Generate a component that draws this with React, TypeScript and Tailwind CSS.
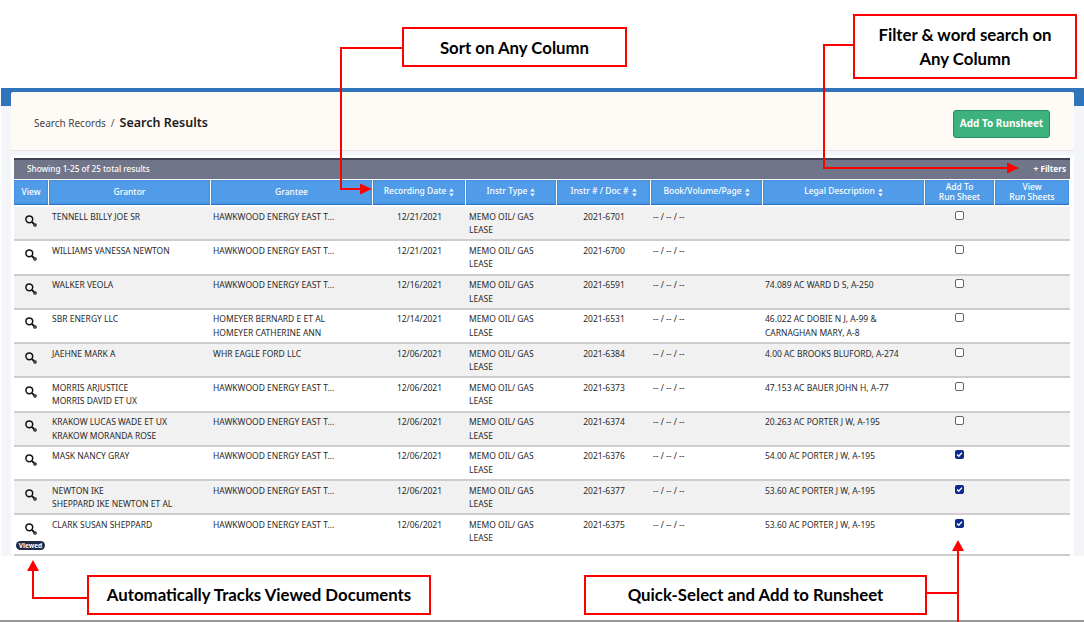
import { Fragment } from "react";

type Row = {
  grantor: string[];
  grantee: string[];
  date: string;
  doc: string;
  legal: string[];
  checked?: boolean;
  viewed?: boolean;
};

const HAWKWOOD = "HAWKWOOD ENERGY EAST T...";

const rows: Row[] = [
  { grantor: ["TENNELL BILLY JOE SR"], grantee: [HAWKWOOD], date: "12/21/2021", doc: "2021-6701", legal: [] },
  { grantor: ["WILLIAMS VANESSA NEWTON"], grantee: [HAWKWOOD], date: "12/21/2021", doc: "2021-6700", legal: [] },
  { grantor: ["WALKER VEOLA"], grantee: [HAWKWOOD], date: "12/16/2021", doc: "2021-6591", legal: ["74.089 AC WARD D S, A-250"] },
  {
    grantor: ["SBR ENERGY LLC"],
    grantee: ["HOMEYER BERNARD E ET AL", "HOMEYER CATHERINE ANN"],
    date: "12/14/2021",
    doc: "2021-6531",
    legal: ["46.022 AC DOBIE N J, A-99 &", "CARNAGHAN MARY, A-8"],
  },
  { grantor: ["JAEHNE MARK A"], grantee: ["WHR EAGLE FORD LLC"], date: "12/06/2021", doc: "2021-6384", legal: ["4.00 AC BROOKS BLUFORD, A-274"] },
  { grantor: ["MORRIS ARJUSTICE", "MORRIS DAVID ET UX"], grantee: [HAWKWOOD], date: "12/06/2021", doc: "2021-6373", legal: ["47.153 AC BAUER JOHN H, A-77"] },
  { grantor: ["KRAKOW LUCAS WADE ET UX", "KRAKOW MORANDA ROSE"], grantee: [HAWKWOOD], date: "12/06/2021", doc: "2021-6374", legal: ["20.263 AC PORTER J W, A-195"] },
  { grantor: ["MASK NANCY GRAY"], grantee: [HAWKWOOD], date: "12/06/2021", doc: "2021-6376", legal: ["54.00 AC PORTER J W, A-195"], checked: true },
  { grantor: ["NEWTON IKE", "SHEPPARD IKE NEWTON ET AL"], grantee: [HAWKWOOD], date: "12/06/2021", doc: "2021-6377", legal: ["53.60 AC PORTER J W, A-195"], checked: true },
  { grantor: ["CLARK SUSAN SHEPPARD"], grantee: [HAWKWOOD], date: "12/06/2021", doc: "2021-6375", legal: ["53.60 AC PORTER J W, A-195"], checked: true, viewed: true },
];

const gridCols = "grid grid-cols-[35px_162px_162px_93px_91px_94px_112px_162px_70px_75px]";

function SortCaret() {
  return (
    <svg width="5" height="9" viewBox="0 0 5 9" className="ml-[3px] inline-block" fill="#ffffff">
      <path d="M2.5 0.5 L4.8 3.5 H0.2 Z" />
      <path d="M2.5 8.5 L4.8 5.5 H0.2 Z" />
    </svg>
  );
}

function HeaderCell({ children, sort }: { children: React.ReactNode; sort?: boolean }) {
  return (
    <div className="mr-[1px] flex h-[25px] items-center justify-center border-b border-[#2f78c4] bg-[#519ce9] pb-[1px] text-center text-[8.5px] leading-[10px] font-medium text-white shadow-[inset_0_0_2px_#2f78c4]">
      <span>
        {children}
        {sort && <SortCaret />}
      </span>
    </div>
  );
}

function LensIcon() {
  return (
    <svg width="12" height="12" viewBox="0 0 12 12" fill="none" stroke="#111111" className="-ml-[1px]">
      <circle cx="4.3" cy="4.3" r="3.4" strokeWidth="1.5" />
      <path d="M6.8 6.8 L9 9" strokeWidth="1.8" />
      <circle cx="10" cy="10" r="1.2" strokeWidth="1.2" />
    </svg>
  );
}

function Checkbox({ checked }: { checked?: boolean }) {
  if (checked) {
    return (
      <span className="flex h-[9px] w-[9px] items-center justify-center rounded-[2px] bg-[#0b2a8c]">
        <svg width="7" height="7" viewBox="0 0 7 7" fill="none" stroke="#ffffff" strokeWidth="1.4">
          <path d="M1 3.6 L2.8 5.3 L6 1.6" />
        </svg>
      </span>
    );
  }
  return <span className="block h-[9px] w-[9px] rounded-[2px] border border-[#666666] bg-white" />;
}

function Lines({ items }: { items: string[] }) {
  return (
    <>
      {items.map((item) => (
        <div key={item} className="whitespace-nowrap">
          {item}
        </div>
      ))}
    </>
  );
}

function TableRow({ row, shaded }: { row: Row; shaded: boolean }) {
  return (
    <div
      className={`${gridCols} border-b-2 border-[#cdcdcd] pt-[2.5px] text-[8.5px] leading-[13.6px] text-[#2a2a2a] ${
        row.viewed ? "h-[41px]" : "h-[34.25px]"
      } ${shaded ? "bg-[#f1f1f1]" : "bg-white"}`}
    >
      <div className="flex flex-col items-center pt-[5px]">
        <LensIcon />
        {row.viewed && (
          <span className="mt-[6px] -ml-[2px] rounded-full bg-[#1f2a44] px-[3px] text-[6.5px] leading-[9px] font-bold text-white">
            Viewed
          </span>
        )}
      </div>
      <div className="pl-[3px]">
        <Lines items={row.grantor} />
      </div>
      <div className="pl-[2px]">
        <Lines items={row.grantee} />
      </div>
      <div className="text-center">{row.date}</div>
      <div className="pl-[3px]">
        <div>MEMO OIL/ GAS</div>
        <div>LEASE</div>
      </div>
      <div className="text-center">{row.doc}</div>
      <div className="pl-[2px]">-- / -- / --</div>
      <div className="pl-[2px]">
        <Lines items={row.legal} />
      </div>
      <div className="flex justify-center pt-[1px] pr-[2px]">
        <Checkbox checked={row.checked} />
      </div>
      <div />
    </div>
  );
}

function Callout({ className, lines }: { className: string; lines: string[] }) {
  return (
    <div
      className={`absolute flex flex-col items-center justify-center border-2 border-[#ff0000] bg-white font-['Lato',sans-serif] text-[16.8px] leading-[24px] font-bold text-black ${className}`}
    >
      {lines.map((line) => (
        <Fragment key={line}>
          <div>{line}</div>
        </Fragment>
      ))}
    </div>
  );
}

export default function App() {
  return (
    <div className="relative flex h-[622px] w-[1084px] flex-col overflow-hidden bg-white pt-[88px] font-['Noto_Sans',sans-serif]">
      <div className="ml-[1px] h-[468px] bg-[#f3f5f9]">
        <div className="h-[18px] bg-[#2f75bb]" />
        <div className="mr-[10px] ml-[10px] -mt-[14px] flex flex-col gap-[4px]">
          {/* Title card */}
          <div className="flex h-[59px] items-center justify-between rounded-[2px] border-b border-[#e6e6e6] bg-[#fefbf6] pt-[5px] pr-[24px] pl-[23px]">
            <div className="flex items-center">
              <span className="text-[10px] text-[#444444]">Search Records</span>
              <span className="mx-[5px] text-[10px] text-[#555555]">/</span>
              <span className="text-[12.5px] font-semibold text-[#1c1c1c]">Search Results</span>
            </div>
            <button className="h-[28px] w-[97px] rounded-[3px] border border-[#1f8f62] bg-[#3db27f] text-[10px] font-bold text-white">
              Add To Runsheet
            </button>
          </div>

          {/* Results table */}
          <div className="h-[401px] rounded-[2px] bg-white pt-[3px] pl-[3px]">
            <div className="flex h-[21px] w-[1056px] items-center justify-between border-t-2 border-[#3f4356] bg-[#70758a] pr-[4px] pl-[13px] text-[8.2px] font-medium text-white">
              <span>Showing 1-25 of 25 total results</span>
              <span className="font-bold">+ Filters</span>
            </div>
            <div className={`${gridCols} mt-[1px] w-[1056px] border-b-2 border-white`}>
              <HeaderCell>View</HeaderCell>
              <HeaderCell>Grantor</HeaderCell>
              <HeaderCell>Grantee</HeaderCell>
              <HeaderCell sort>Recording Date</HeaderCell>
              <HeaderCell sort>Instr Type</HeaderCell>
              <HeaderCell sort>Instr # / Doc #</HeaderCell>
              <HeaderCell sort>Book/Volume/Page</HeaderCell>
              <HeaderCell sort>Legal Description</HeaderCell>
              <HeaderCell>
                Add To
                <br />
                Run Sheet
              </HeaderCell>
              <HeaderCell>
                View
                <br />
                Run Sheets
              </HeaderCell>
            </div>
            <div className="w-[1056px]">
              {rows.map((row, i) => (
                <TableRow key={row.doc} row={row} shaded={i % 2 === 0} />
              ))}
            </div>
          </div>
        </div>
      </div>

      <div className="mt-auto h-[2px] bg-[#999999]" />

      {/* Annotation layer */}
      <svg className="pointer-events-none absolute inset-0" width="1084" height="622" viewBox="0 0 1084 622">
        <g fill="none" stroke="#ff0000" strokeWidth="2">
          <path d="M402 48 H341 V189 H362" />
          <path d="M853 45 H824 V168 H1009" />
          <path d="M88 598 H33 V570" />
          <path d="M926 593 H958" />
          <path d="M958 622 V550" />
        </g>
        <g fill="#ff0000">
          <path d="M372 189 L360 183.5 V194.5 Z" />
          <path d="M1019 168 L1007 162.5 V173.5 Z" />
          <path d="M33 560 L27 571 H39 Z" />
          <path d="M958 540 L952 551 H964 Z" />
        </g>
      </svg>
      <Callout className="top-[27px] left-[402px] h-[40px] w-[225px] pt-[2px]" lines={["Sort on Any Column"]} />
      <Callout className="top-[14px] left-[853px] h-[65px] w-[224px]" lines={["Filter & word search on", "Any Column"]} />
      <Callout className="top-[575px] left-[87px] h-[40px] w-[344px]" lines={["Automatically Tracks Viewed Documents"]} />
      <Callout className="top-[575px] left-[584px] h-[40px] w-[343px]" lines={["Quick-Select and Add to Runsheet"]} />
    </div>
  );
}
